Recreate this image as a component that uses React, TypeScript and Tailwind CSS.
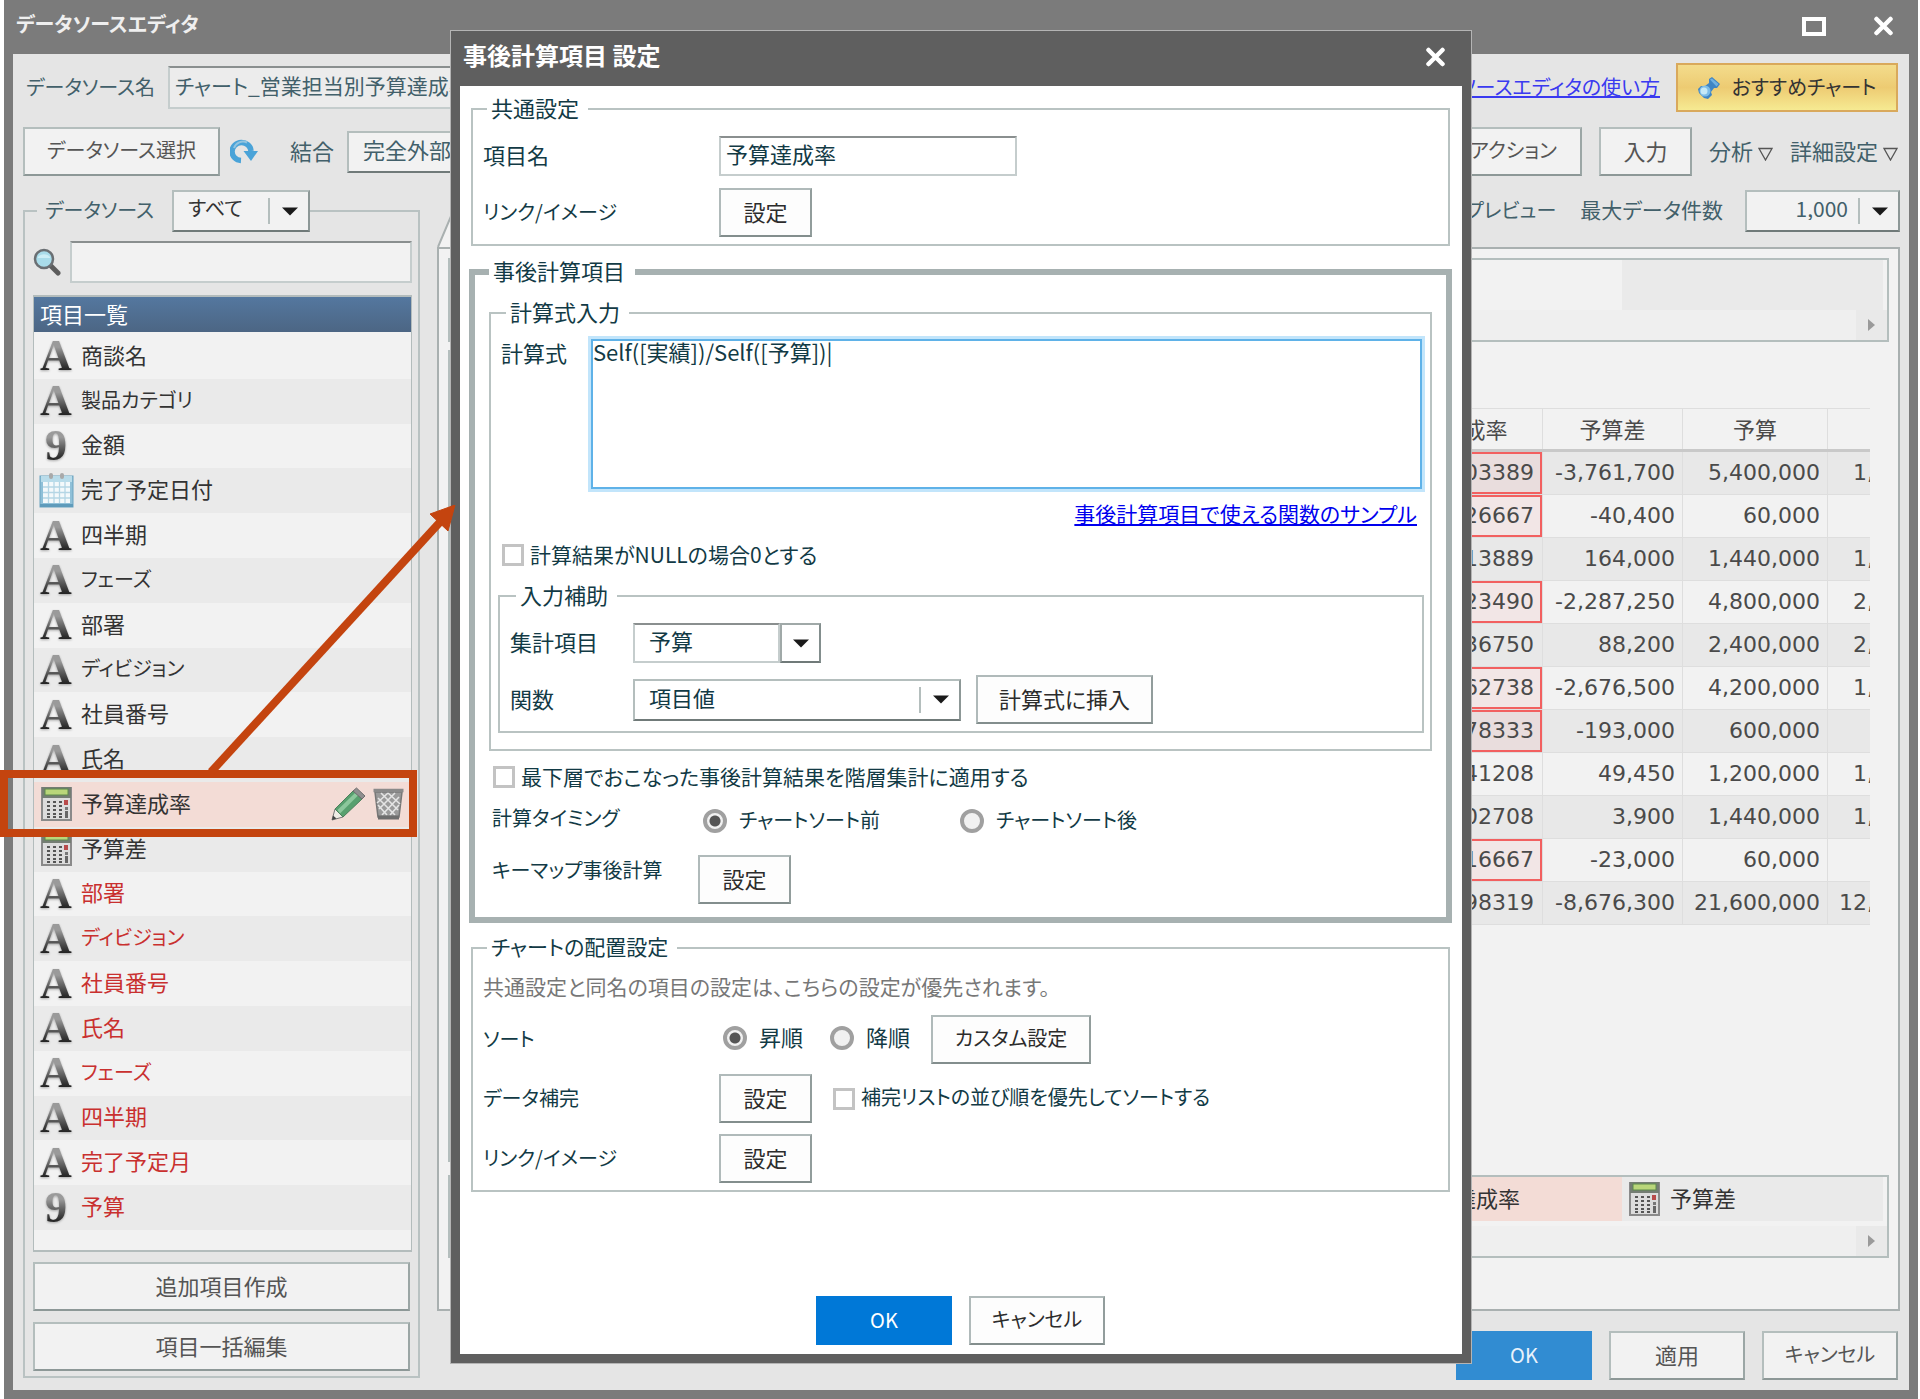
import React from 'react';

type Kind = 'text' | 'number' | 'date' | 'calc';
type Item = { name: string; kind: Kind; red?: boolean; selected?: boolean; kana?: boolean };

const items: Item[] = [
  { name: '商談名', kind: 'text' },
  { name: '製品カテゴリ', kind: 'text', kana: true },
  { name: '金額', kind: 'number' },
  { name: '完了予定日付', kind: 'date' },
  { name: '四半期', kind: 'text' },
  { name: 'フェーズ', kind: 'text', kana: true },
  { name: '部署', kind: 'text' },
  { name: 'ディビジョン', kind: 'text', kana: true },
  { name: '社員番号', kind: 'text' },
  { name: '氏名', kind: 'text' },
  { name: '予算達成率', kind: 'calc', selected: true },
  { name: '予算差', kind: 'calc' },
  { name: '部署', kind: 'text', red: true },
  { name: 'ディビジョン', kind: 'text', red: true, kana: true },
  { name: '社員番号', kind: 'text', red: true },
  { name: '氏名', kind: 'text', red: true },
  { name: 'フェーズ', kind: 'text', red: true, kana: true },
  { name: '四半期', kind: 'text', red: true },
  { name: '完了予定月', kind: 'text', red: true },
  { name: '予算', kind: 'number', red: true },
];

const rows = [
  { rate: '0.303389', diff: '-3,761,700', budget: '5,400,000', actual: '1,638,300', alert: true },
  { rate: '0.326667', diff: '-40,400', budget: '60,000', actual: '19,600', alert: true },
  { rate: '1.113889', diff: '164,000', budget: '1,440,000', actual: '1,604,000', alert: false },
  { rate: '0.523490', diff: '-2,287,250', budget: '4,800,000', actual: '2,512,750', alert: true },
  { rate: '1.036750', diff: '88,200', budget: '2,400,000', actual: '2,488,200', alert: false },
  { rate: '0.362738', diff: '-2,676,500', budget: '4,200,000', actual: '1,523,500', alert: true },
  { rate: '0.678333', diff: '-193,000', budget: '600,000', actual: '407,000', alert: true },
  { rate: '1.041208', diff: '49,450', budget: '1,200,000', actual: '1,249,450', alert: false },
  { rate: '1.002708', diff: '3,900', budget: '1,440,000', actual: '1,443,900', alert: false },
  { rate: '0.616667', diff: '-23,000', budget: '60,000', actual: '37,000', alert: true },
  { rate: '0.598319', diff: '-8,676,300', budget: '21,600,000', actual: '12,923,700', alert: false },
];

function CalcIcon() {
  return (
    <svg viewBox="0 0 31 34" className="h-[34px] w-[31px] shrink-0" aria-hidden="true">
      <rect x="1" y="1" width="29" height="32" fill="#dcdcdc" stroke="#8a8a8a" strokeWidth="2" />
      <rect x="1" y="0" width="29" height="11" fill="#747d73" />
      <rect x="4" y="2" width="23" height="6" fill="#b9d67a" stroke="#5d8a4c" strokeWidth="1" />
      {[14, 18, 22, 26, 29].map((y) =>
        [6, 12, 18].map((x) => <rect key={`${x}-${y}`} x={x} y={y} width="3" height="2" fill="#555" />),
      )}
      <rect x="23" y="13" width="4" height="5" fill="#b84a4a" />
      <rect x="24" y="20" width="3" height="3" fill="#777" />
      <rect x="24" y="24" width="3" height="7" fill="#666" />
    </svg>
  );
}

function CalendarIcon() {
  return (
    <svg viewBox="0 0 35 35" className="h-[35px] w-[35px] shrink-0" aria-hidden="true">
      <rect x="1" y="3" width="33" height="31" fill="#8fc0d8" stroke="#6ba3bf" strokeWidth="1" />
      <rect x="2" y="3" width="31" height="6" fill="#b9dcea" />
      <rect x="4" y="9" width="27" height="21" fill="#f4f9fb" />
      <path d="M4 14H31M4 19.5H31M4 25H31M9.500 9V30M15 9V30M20.500 9V30M26 9V30" stroke="#b5d6e5" strokeWidth="1.300" />
      <rect x="1" y="31" width="33" height="3" fill="#5e9bbb" />
      <rect x="10" y="0" width="4" height="6" rx="2" fill="#a9a9a9" />
      <rect x="21" y="0" width="4" height="6" rx="2" fill="#a9a9a9" />
    </svg>
  );
}

function KindIcon({ kind }: { kind: Kind }) {
  if (kind === 'calc') return <CalcIcon />;
  if (kind === 'date') return <CalendarIcon />;
  return (
    <span className="bg-linear-to-b from-[#9a9a9a] from-30% to-[#262626] to-80% bg-clip-text font-['Liberation_Serif',serif] text-[44px] leading-[44px] font-bold text-transparent drop-shadow-[0_1px_1px_rgba(0,0,0,0.3)]">
      {kind === 'text' ? 'A' : '9'}
    </span>
  );
}

function PencilIcon() {
  return (
    <svg viewBox="0 0 34 34" className="h-[34px] w-[34px]" aria-hidden="true">
      <path d="M1 33L4 22L12 30Z" fill="#efece6" stroke="#777" strokeWidth="1" />
      <path d="M1 33L2 28.500L5.500 31.500Z" fill="#444" />
      <path d="M4 22L22 4L31 12L12 30Z" fill="#58a06f" stroke="#4d7f5c" strokeWidth="1" />
      <path d="M6.500 23L24 6L27 8.500L9 26.500Z" fill="#8cc79c" />
      <path d="M22 4L25.500 1L34 9L31 12Z" fill="#8f8f8f" stroke="#6e6e6e" strokeWidth="1" />
    </svg>
  );
}

function TrashIcon() {
  return (
    <svg viewBox="0 0 31 32" className="h-[32px] w-[31px]" aria-hidden="true">
      <path d="M2 4H29L26 29H5Z" fill="#9a9a9a" stroke="#777" strokeWidth="1.500" />
      <path d="M5 10L22 27M8 5L25 22M15 5L27 16M5 17L14 27M26 9L9 27M22 5L6 21M15 5L4 15M26 17L17 27" stroke="#e4e4e4" strokeWidth="1.600" />
      <path d="M0.500 2.500H30.500" stroke="#8a8a8a" strokeWidth="3.500" />
      <path d="M5 29.500H26" stroke="#6d6d6d" strokeWidth="4" />
    </svg>
  );
}

function SearchIcon() {
  return (
    <svg viewBox="0 0 28 28" className="h-7 w-7 shrink-0" aria-hidden="true">
      <path d="M17 17L25 25" stroke="#5c5c5c" strokeWidth="5" strokeLinecap="round" />
      <circle cx="11" cy="11" r="9" fill="#a9dcea" stroke="#6a6f73" strokeWidth="2.500" />
      <path d="M4.500 10a7 6 0 0 1 13 0Z" fill="#cdeef6" />
    </svg>
  );
}

function RefreshIcon() {
  return (
    <svg viewBox="0 0 28 26" className="h-[26px] w-7" aria-hidden="true">
      <path d="M11 21.500A9.500 9 0 1 1 21 12" fill="none" stroke="#4aa3d8" strokeWidth="5.500" />
      <path d="M13.500 12H28L21 22Z" fill="#4aa3d8" />
      <path d="M4 9A9.500 9.500 0 0 1 17 3.500" fill="none" stroke="#93c4df" strokeWidth="2" />
    </svg>
  );
}

function PinIcon() {
  return (
    <svg viewBox="0 0 22 22" className="h-[22px] w-[22px]" aria-hidden="true">
      <path d="M11 2L14 0L22 7L19 11L16 11L13 15L14 18L10 22L6 21L1 16L0 12L3 9L7 9L11 6Z" fill="#3f85c4" />
      <path d="M12 2.500L14 1.500L20.500 7L18.500 9.500Z" fill="#6fb0e0" />
      <circle cx="7" cy="14" r="5.500" fill="#7dbde8" />
      <circle cx="6" cy="14" r="3.500" fill="#c5e9f7" />
    </svg>
  );
}

function CloseIcon() {
  return (
    <svg viewBox="0 0 19 20" className="h-5 w-[19px]" aria-hidden="true">
      <path d="M2.500 3L16.500 17M16.500 3L2.500 17" stroke="#fff" strokeWidth="4.500" strokeLinecap="round" />
    </svg>
  );
}

function DownArrow() {
  return (
    <svg viewBox="0 0 16 9" className="h-[9px] w-4" aria-hidden="true">
      <path d="M0 0.500H16L8 8.500Z" fill="#1a1a1a" />
    </svg>
  );
}

const softButton =
  'h-[49px] shrink-0 border-2 border-[#b4bebd] border-r-[#9ba6a5] border-b-[#8d9897] bg-[#f2f2f2] pb-1 text-[#555]';
const whiteButton =
  'h-[49px] shrink-0 border-2 border-[#b0baba] border-r-[#929d9c] border-b-[#838e8d] bg-[#fdfdfd] pb-1 text-[#2c2c2c]';

function Picker({
  label,
  value,
  className,
  textClass,
}: {
  label: string;
  value: string;
  className: string;
  textClass: string;
}) {
  return (
    <span className={`relative block h-[42px] shrink-0 ${className}`}>
      <select
        aria-label={label}
        defaultValue={value}
        className={`h-full w-full appearance-none border-2 border-[#b4bebd] border-r-[#8d9897] border-b-[#707a79] bg-inherit pb-[6px] ${textClass}`}
      >
        <option>{value}</option>
      </select>
      <span className="pointer-events-none absolute top-2 right-0 flex h-[26px] w-[42px] items-center justify-center border-l-2 border-[#b4bebd]">
        <DownArrow />
      </span>
    </span>
  );
}

function Check({ children }: { children: React.ReactNode }) {
  return (
    <label className="flex h-6 items-center gap-[6px]">
      <input type="checkbox" className="h-[22px] w-[22px] appearance-none border-[3px] border-[#c3c3c3] bg-white" />
      <span className="pb-[3px]">{children}</span>
    </label>
  );
}

function Radio({ name, on, children }: { name: string; on?: boolean; children: React.ReactNode }) {
  return (
    <label className="flex h-6 items-center gap-3">
      <input
        type="radio"
        name={name}
        defaultChecked={on}
        className="h-6 w-6 appearance-none rounded-full border-4 border-[#a0a0a0] bg-[#f1f1f1] checked:bg-[radial-gradient(circle,#555_5px,#f1f1f1_6px)]"
      />
      <span className="pb-[3px]">{children}</span>
    </label>
  );
}

function ScrollEnd() {
  return (
    <div className="flex h-[30px] justify-end bg-[#efefef]">
      <button type="button" aria-label="右へスクロール" className="flex w-[31px] items-center justify-center bg-[#e9e9e9]">
        <svg viewBox="0 0 7 12" className="h-3 w-[7px]" aria-hidden="true">
          <path d="M0 0L7 6L0 12Z" fill="#9a9a9a" />
        </svg>
      </button>
    </div>
  );
}

function Sidebar() {
  return (
    <fieldset className="w-[397px] shrink-0 self-start border-2 border-[#b9c2c2] pr-[6px] pb-[5px] pl-2">
      <legend className="ml-1 flex h-[42px] items-center pl-2 text-[#42606a]">
        <span className="w-[127px] pb-[2px] text-xl">データソース</span>
        <Picker label="データソース" value="すべて" className="w-[138px] bg-[#f2f2f2]" textClass="pl-[14px] text-xl text-[#333]" />
      </legend>
      <div className="mt-[9px] flex items-center gap-[9px]">
        <SearchIcon />
        <input
          aria-label="項目検索"
          className="h-[42px] min-w-0 flex-1 border-2 border-[#c5cdcd] border-t-[#8a8f8f] bg-[#f2f2f2] px-2"
        />
      </div>
      <div className="mt-3 h-[957px] border-x border-y-2 border-[#b3bcbc] bg-[#f2f2f2]">
        <h2 className="h-[35px] bg-linear-to-b from-[#54779f] to-[#4c6684] pl-[6px] leading-[33px] text-white">項目一覧</h2>
        <ul className="mt-[2px] grid h-[896px] grid-rows-[repeat(20,minmax(0,1fr))]">
          {items.map((it, i) => (
            <li
              key={i}
              className={`flex items-center pl-[5px] ${it.selected ? 'bg-[#f3dcd6]' : i % 2 ? 'bg-[#eaeaea]' : 'bg-[#f2f2f2]'}`}
            >
              <span className="flex h-10 w-[34px] shrink-0 items-center justify-center">
                <KindIcon kind={it.kind} />
              </span>
              <span
                className={`flex-1 pl-2 ${it.kana ? 'pb-[3px] text-xl' : 'pb-[5px]'} ${it.red ? 'text-[#c9302f]' : 'text-[#333]'}`}
              >
                {it.name}
              </span>
              {it.selected && (
                <span className="flex items-center gap-2 pr-[7px]">
                  <button type="button" aria-label="編集">
                    <PencilIcon />
                  </button>
                  <button type="button" aria-label="削除">
                    <TrashIcon />
                  </button>
                </span>
              )}
            </li>
          ))}
        </ul>
      </div>
      <div className="mt-[10px] mr-[2px] flex flex-col gap-[11px]">
        <button type="button" className={softButton}>
          追加項目作成
        </button>
        <button type="button" className={softButton}>
          項目一括編集
        </button>
      </div>
    </fieldset>
  );
}

function DataTable() {
  const head = 'border border-[#dedede] border-b-[3px] border-b-[#c9c9c9] pt-1 font-normal';
  const cell = 'border border-[#dedede] pr-[7px] text-right';
  return (
    <div className="mr-[19px] flex justify-end overflow-hidden">
      <table className="-mr-[103px] w-[610px] shrink-0 table-fixed border-collapse font-['DejaVu_Sans','Noto_Sans_CJK_JP',sans-serif] text-[#4a4a4a]">
        <colgroup>
          <col className="w-[180px]" />
          <col className="w-[140px]" />
          <col className="w-[145px]" />
          <col className="w-[145px]" />
        </colgroup>
        <thead>
          <tr className="h-[42px]">
            <th className={head}>予算達成率</th>
            <th className={head}>予算差</th>
            <th className={head}>予算</th>
            <td className={head} />
          </tr>
        </thead>
        <tbody>
          {rows.map((r, i) => (
            <tr key={i} className={`h-[43px] ${i % 2 ? 'bg-[#f2f2f2]' : 'bg-[#e8e8e8]'}`}>
              <td className="border border-[#dedede] p-0 text-right">
                <div
                  className={`h-[42px] pr-[6px] leading-[38px] ${r.alert ? 'border-2 border-[#f26060] bg-red-500/6' : 'border-2 border-transparent'}`}
                >
                  {r.rate}
                </div>
              </td>
              <td className={cell}>{r.diff}</td>
              <td className={cell}>{r.budget}</td>
              <td className={cell}>{r.actual}</td>
            </tr>
          ))}
        </tbody>
      </table>
    </div>
  );
}

function Preview() {
  return (
    <section className="flex min-w-0 flex-1 flex-col">
      <div className="flex h-[57px] items-start justify-between">
        <svg viewBox="0 0 60 57" className="h-[57px] w-[60px]" aria-hidden="true">
          <path d="M1 57L20 12H60V57Z" fill="#f2f2f2" />
          <path d="M1 57L20 12H60" fill="none" stroke="#a9b0b0" strokeWidth="2" />
        </svg>
        <div className="flex items-center text-[#42606a]">
          <span className="text-xl">
            <Check>プレビュー</Check>
          </span>
          <span className="ml-6 pb-1 text-[21px]">最大データ件数</span>
          <Picker
            label="最大データ件数"
            value="1,000"
            className="ml-[22px] w-[155px] bg-[#f2f2f2]"
            textClass="pr-[50px] text-[21px] [text-align-last:right] text-[#42606a]"
          />
        </div>
      </div>
      <div className="border-2 border-[#a9b0b0] bg-[#f2f2f2] px-[9px] pt-[9px] pb-[51px]">
        <div className="border-2 border-[#b4bebd]">
          <div className="flex h-[50px] justify-end pr-1">
            <div className="w-[261px] bg-[#eaeaea]" />
          </div>
          <ScrollEnd />
        </div>
        <div className="mt-2 flex h-[812px] flex-col border-l-2 border-[#b4bebd] pt-[58px]">
          <DataTable />
        </div>
        <div className="mt-[13px] border-2 border-[#b4bebd]">
          <div className="flex h-11 justify-end pr-1 text-[#333]">
            <div className="flex w-[260px] items-center gap-[10px] bg-[#f3dcd6] pl-[7px]">
              <CalcIcon />
              <span className="pb-1">予算達成率</span>
            </div>
            <div className="flex w-[261px] items-center gap-[10px] bg-[#eaeaea] pl-[7px]">
              <CalcIcon />
              <span className="pb-1">予算差</span>
            </div>
          </div>
          <div className="h-[5px]" />
          <ScrollEnd />
        </div>
      </div>
      <div className="mt-5 flex justify-end gap-[17px] pr-[2px]">
        <button type="button" className="h-[49px] w-[136px] bg-[#318cd2] pb-[2px] text-xl text-[#e8f2fb]">
          OK
        </button>
        <button type="button" className={`${softButton} w-[136px]`}>
          適用
        </button>
        <button type="button" className={`${softButton} w-[136px] text-xl`}>
          キャンセル
        </button>
      </div>
    </section>
  );
}

const line = 'border-2 border-[#b9c3c2]';
const legend = 'h-6 leading-5';

function Dialog() {
  return (
    <div
      role="dialog"
      aria-label="事後計算項目 設定"
      className="w-[1022px] border border-[#b4b4b4] bg-[#5f5f5f] px-[9px] pb-[9px] text-[#123a45]"
    >
      <header className="flex h-[55px] items-center justify-between pr-[17px] pb-[3px] pl-[3px]">
        <h2 className="pb-1 text-2xl leading-6 font-bold text-white">事後計算項目 設定</h2>
        <button type="button" aria-label="閉じる">
          <CloseIcon />
        </button>
      </header>
      <div className="bg-white pt-[11px] pr-[10px] pb-[9px] pl-[9px]">
        <fieldset className={`${line} mx-[2px] px-[10px] pb-[7px]`}>
          <legend className={`${legend} ml-1 pr-[9px] pl-1`}>共通設定</legend>
          <div className="mt-[15px] flex h-10 items-center">
            <label htmlFor="item-name" className="w-[236px] pb-1">
              項目名
            </label>
            <input
              id="item-name"
              defaultValue="予算達成率"
              className="h-10 w-[298px] border-2 border-[#c5cdcd] border-t-[#8a8f8f] bg-white px-[5px] pb-[6px]"
            />
          </div>
          <div className="mt-3 flex items-center">
            <span className="w-[236px] pb-[2px] text-xl">リンク/イメージ</span>
            <button type="button" className={`${whiteButton} w-[93px]`}>
              設定
            </button>
          </div>
        </fieldset>

        <fieldset className="mt-[14px] border-[6px] border-[#a7b1b1] px-[14px] pb-[13px]">
          <legend className={`${legend} pr-[10px] pl-1`}>事後計算項目</legend>
          <fieldset className={`${line} mt-[17px] pr-[6px] pb-4 pl-[7px]`}>
            <legend className={`${legend} ml-2 pr-[9px] pl-1`}>計算式入力</legend>
            <div className="mt-3 flex items-start">
              <label htmlFor="formula" className="w-[91px] shrink-0 pt-[3px] pl-[3px]">
                計算式
              </label>
              <textarea
                id="formula"
                defaultValue="Self([実績])/Self([予算])|"
                className="m-[2px] block h-[150px] min-w-0 flex-1 resize-none border-2 border-[#5fb2e8] bg-white leading-5 ring-[3px] ring-[#c2e5fb] outline-none"
              />
            </div>
            <div className="mt-3 flex h-6 items-center justify-end pr-[7px]">
              <a href="#samples" className="pb-1 text-[21px] text-[#0000ee] underline">
                事後計算項目で使える関数のサンプル
              </a>
            </div>
            <div className="mt-4 pl-1 text-[21px]">
              <Check>計算結果がNULLの場合0とする</Check>
            </div>
            <fieldset className={`${line} mt-[17px] px-[10px] pb-[7px]`}>
              <legend className={`${legend} ml-[6px] pr-[9px] pl-1`}>入力補助</legend>
              <div className="mt-[15px] flex h-10 items-center">
                <label htmlFor="target" className="w-[123px] pb-1">
                  集計項目
                </label>
                <input
                  id="target"
                  defaultValue="予算"
                  className="h-10 w-[147px] border-2 border-[#c5cdcd] border-t-[#8a8f8f] bg-white px-[14px] pb-[6px]"
                />
                <button
                  type="button"
                  aria-label="集計項目を選ぶ"
                  className="flex h-10 w-[41px] items-center justify-center border-2 border-[#a0a9a8] border-r-[#838e8d] border-b-[#707a79] bg-white"
                >
                  <DownArrow />
                </button>
              </div>
              <div className="mt-3 flex items-center">
                <span className="w-[123px] pb-1">関数</span>
                <Picker label="関数" value="項目値" className="w-[328px] bg-white" textClass="pl-[14px] text-[#123a45]" />
                <button type="button" className={`${whiteButton} ml-[15px] w-[177px]`}>
                  計算式に挿入
                </button>
              </div>
            </fieldset>
          </fieldset>
          <div className="mt-[14px] pl-1 text-[21px]">
            <Check>最下層でおこなった事後計算結果を階層集計に適用する</Check>
          </div>
          <div className="mt-5 flex h-6 items-center pl-[3px] text-xl">
            <span className="w-[211px] pb-[6px]">計算タイミング</span>
            <span className="w-[257px]">
              <Radio name="timing" on>
                チャートソート前
              </Radio>
            </span>
            <Radio name="timing">チャートソート後</Radio>
          </div>
          <div className="mt-[22px] flex items-start pl-[3px]">
            <span className="w-[206px] text-xl leading-[30px]">キーマップ事後計算</span>
            <button type="button" className={`${whiteButton} w-[93px]`}>
              設定
            </button>
          </div>
        </fieldset>

        <fieldset className={`${line} mx-[2px] mt-[13px] px-[10px] pb-[7px]`}>
          <legend className={`${legend} ml-1 pr-[9px] pl-1 text-[21px]`}>チャートの配置設定</legend>
          <p className="mt-[14px] pb-[2px] text-[21px] leading-6 text-[#777]">
            共通設定と同名の項目の設定は、こちらの設定が優先されます。
          </p>
          <div className="mt-[15px] flex items-center">
            <span className="w-[240px] pb-[2px] text-xl">ソート</span>
            <span className="w-[107px] pb-1">
              <Radio name="sort" on>
                昇順
              </Radio>
            </span>
            <span className="w-[101px] pb-1">
              <Radio name="sort">降順</Radio>
            </span>
            <button type="button" className={`${whiteButton} w-[160px] text-xl`}>
              カスタム設定
            </button>
          </div>
          <div className="mt-[10px] flex items-center">
            <span className="w-[236px] pb-[2px] text-xl">データ補完</span>
            <button type="button" className={`${whiteButton} mr-[21px] w-[93px]`}>
              設定
            </button>
            <span className="text-xl">
              <Check>補完リストの並び順を優先してソートする</Check>
            </span>
          </div>
          <div className="mt-[11px] flex items-center">
            <span className="w-[236px] pb-[2px] text-xl">リンク/イメージ</span>
            <button type="button" className={`${whiteButton} w-[93px]`}>
              設定
            </button>
          </div>
        </fieldset>

        <div className="mt-[104px] flex justify-center gap-[17px]">
          <button type="button" className="h-[49px] w-[136px] bg-[#0078d7] pb-[2px] text-xl text-white">
            OK
          </button>
          <button type="button" className={`${whiteButton} w-[136px] text-xl`}>
            キャンセル
          </button>
        </div>
      </div>
    </div>
  );
}

export default function App() {
  return (
    <div className="relative overflow-hidden bg-white pr-[2px] pl-1 font-['Noto_Sans_CJK_JP',sans-serif] text-[22px] leading-6 [font-feature-settings:'palt']">
      <div className="min-h-screen bg-[#7b7b7b] px-[9px] pb-[9px]">
        <header className="flex h-[54px] items-center justify-between pr-4 pb-[2px] pl-[3px]">
          <h1 className="pb-1 text-xl leading-6 font-bold text-[#efefef]">データソースエディタ</h1>
          <div className="flex items-center gap-12">
            <button type="button" aria-label="最大化" className="h-[19px] w-6 border-4 border-white" />
            <button type="button" aria-label="閉じる">
              <CloseIcon />
            </button>
          </div>
        </header>
        <main className="bg-[#e5e5e5] pt-[9px] pr-[9px] pb-[10px] pl-[10px]">
          <div className="flex h-[49px] items-center pr-[2px] pl-[3px] text-[#42606a]">
            <label htmlFor="source-name" className="w-[142px] pb-[2px] text-xl whitespace-nowrap">
              データソース名
            </label>
            <input
              id="source-name"
              defaultValue="チャート_営業担当別予算達成率"
              className="h-[43px] w-[420px] border-2 border-[#c5cdcd] border-t-[#8a8f8f] bg-[#ececec] px-[5px] pb-[6px] text-[21px]"
            />
            <a href="#help" className="ml-auto pb-[2px] text-xl text-[#3a3af0] underline">
              データソースエディタの使い方
            </a>
            <button
              type="button"
              className="ml-4 flex h-[49px] w-[222px] items-center justify-center gap-3 border-2 border-[#d9a95c] bg-linear-to-b from-[#f3dc8c] via-[#edcb72] to-[#f6ea92] text-xl text-[#333]"
            >
              <PinIcon />
              <span className="pb-[2px]">おすすめチャート</span>
            </button>
          </div>
          <div className="mt-[15px] flex h-[49px] items-center pr-[2px] text-[#42606a]">
            <button type="button" className={`${softButton} w-[197px] text-xl`}>
              データソース選択
            </button>
            <button type="button" aria-label="更新" className="ml-[10px]">
              <RefreshIcon />
            </button>
            <span className="ml-8 pb-1">結合</span>
            <Picker label="結合" value="完全外部結合" className="ml-[13px] w-[220px] bg-[#f2f2f2]" textClass="pl-[14px] text-[#42606a]" />
            <button type="button" className={`${softButton} ml-auto px-[23px] text-xl`}>
              セルアクション
            </button>
            <button type="button" className={`${softButton} ml-[17px] w-[93px]`}>
              入力
            </button>
            {['分析', '詳細設定'].map((t) => (
              <button key={t} type="button" className="ml-[17px] flex items-center gap-[5px]">
                <span className="pb-1">{t}</span>
                <svg viewBox="0 0 15 14" className="mt-1 h-[14px] w-[15px]" aria-hidden="true">
                  <path d="M1 1.500H14L7.500 13Z" fill="none" stroke="#555" strokeWidth="1.300" />
                </svg>
              </button>
            ))}
          </div>
          <div className="mt-[14px] flex gap-[17px]">
            <Sidebar />
            <Preview />
          </div>
        </main>
      </div>

      <div className="pointer-events-none absolute inset-x-0 top-[30px] flex justify-center pl-[2px]">
        <div className="pointer-events-auto">
          <Dialog />
        </div>
      </div>

      <div className="pointer-events-none absolute top-[770px] left-0 h-[67px] w-[417px] border-8 border-[#c4440f]" />
      <svg viewBox="0 0 260 270" className="pointer-events-none absolute top-[505px] left-[200px] h-[270px] w-[260px]" aria-hidden="true">
        <path d="M11 267L241 16" stroke="#c4440f" strokeWidth="8" />
        <path d="M255 0L230 9L248 26Z" fill="#c4440f" stroke="#c4440f" />
      </svg>
    </div>
  );
}
